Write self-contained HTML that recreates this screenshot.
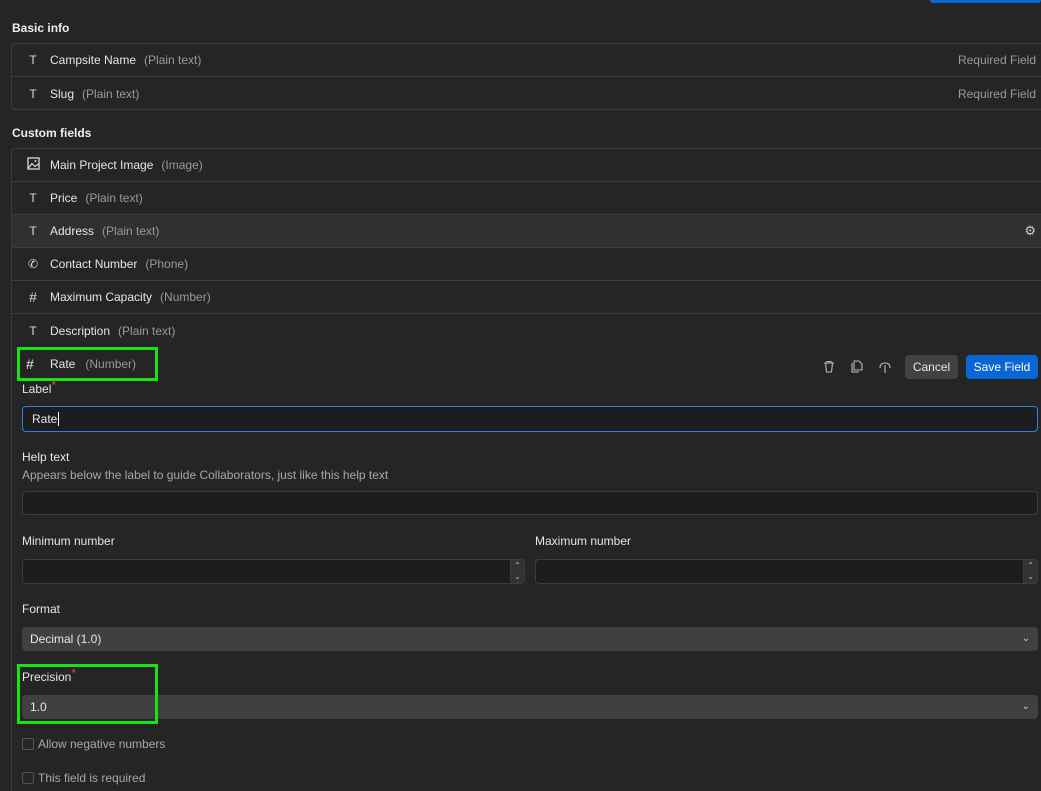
<!DOCTYPE html>
<html><head><style>
*{box-sizing:border-box;margin:0;padding:0}
html{width:1041px;height:791px;overflow:hidden}
body{width:1041px;height:791px;overflow:hidden;background:#252525;font-family:"Liberation Sans",sans-serif;font-size:12px;color:#e6e6e6;position:relative}
.a{position:absolute}
h3{position:absolute;left:12px;font-size:12px;font-weight:bold;color:#eee}
.box{position:absolute;left:11px;width:1040px;border:1px solid #3c3c3c;border-radius:4px}
.row{height:33px;border-bottom:1px solid #3c3c3c;position:relative;display:flex;align-items:center}
.row:last-child{border-bottom:none}
.ic{position:absolute;left:14px;width:14px;text-align:center;color:#ddd;font-size:12px}
.nm{position:absolute;left:38px}
.ty{color:#9a9a9a;margin-left:8px}
.req{position:absolute;right:13px;color:#9a9a9a}
.lbl{position:absolute;left:22px;color:#e6e6e6}
.inp{position:absolute;background:#1d1d1d;border:1px solid #3c3c3c;border-radius:4px;height:25px}
.sel{position:absolute;left:22px;width:1016px;height:24px;background:#404040;border-radius:4px;padding-left:8px;line-height:24px}
.chev{position:absolute;right:8px;top:0;color:#ccc;font-size:10px}
.star{color:#ff3b3b;position:relative;top:-4px}
.cb{position:absolute;left:22px;width:12px;height:12px;border:1px solid #555;border-radius:2px;background:#262626}
.green{position:absolute;border:3px solid #14e614}
.spin{position:absolute;right:0;top:0;width:14px;height:23px;background:#333;border-left:1px solid #3c3c3c;font-size:8px;color:#bbb;text-align:center;line-height:11px}
</style></head><body>
<div class="a" style="left:930px;top:0;width:111px;height:3px;background:#0a66d4;border-radius:0 0 3px 3px"></div>
<h3 style="top:21px">Basic info</h3>
<div class="box" style="top:43px;height:67px">
 <div class="row"><span class="ic">T</span><span class="nm">Campsite Name<span class="ty">(Plain text)</span></span><span class="req" style="right:14px">Required Field</span></div>
 <div class="row"><span class="ic">T</span><span class="nm">Slug<span class="ty">(Plain text)</span></span><span class="req" style="right:14px">Required Field</span></div>
</div>
<h3 style="top:126px">Custom fields</h3>
<div class="box" style="top:148px;height:660px">
 <div class="row"><span class="ic"><svg width="13" height="13" viewBox="0 0 13 13"><rect x="1" y="1" width="11" height="11" fill="none" stroke="#ddd" stroke-width="1.3"/><path d="M1.5 11 L5 6.5 L8 9.5 L11.5 7" fill="none" stroke="#ddd" stroke-width="1.2"/><circle cx="8.5" cy="4" r="1" fill="#ddd"/></svg></span><span class="nm">Main Project Image<span class="ty">(Image)</span></span></div>
 <div class="row"><span class="ic">T</span><span class="nm">Price<span class="ty">(Plain text)</span></span></div>
 <div class="row" style="background:#303030"><span class="ic">T</span><span class="nm">Address<span class="ty">(Plain text)</span></span><span class="req" style="right:14px;color:#ccc;font-size:13px">⚙</span></div>
 <div class="row"><span class="ic">✆</span><span class="nm">Contact Number<span class="ty">(Phone)</span></span></div>
 <div class="row"><span class="ic" style="font-size:14px">#</span><span class="nm">Maximum Capacity<span class="ty">(Number)</span></span></div>
 <div class="row"><span class="ic">T</span><span class="nm">Description<span class="ty">(Plain text)</span></span></div>
</div>
<span class="a" style="left:26px;top:356px;font-size:14px">#</span>
<span class="a" style="left:50px;top:357px">Rate<span class="ty" style="margin-left:10px">(Number)</span></span>
<svg class="a" style="left:823px;top:360px" width="12" height="13" viewBox="0 0 12 13"><path d="M1 3h10 M4 3V1.5h4V3 M2.5 3l1 9h5l1-9" fill="none" stroke="#bbb" stroke-width="1.1"/></svg>
<svg class="a" style="left:851px;top:360px" width="12" height="13" viewBox="0 0 12 13"><path d="M3 1h5l3 3v6H3z M1 3v9h7" fill="none" stroke="#bbb" stroke-width="1.1"/></svg>
<svg class="a" style="left:879px;top:360px" width="12" height="13" viewBox="0 0 12 13"><path d="M6 5v8 M1 8 Q1 3 6 3 Q11 3 11 8" fill="none" stroke="#bbb" stroke-width="1.1"/></svg>
<div class="a" style="left:905px;top:355px;width:53px;height:24px;background:#424242;border-radius:4px;line-height:24px;text-align:center">Cancel</div>
<div class="a" style="left:966px;top:355px;width:72px;height:24px;background:#0a66d4;border-radius:4px;line-height:24px;text-align:center;color:#fff">Save Field</div>
<span class="lbl" style="top:382px">Label<span class="star">*</span></span>
<div class="inp" style="left:22px;top:406px;width:1016px;height:26px;border-color:#2f7fe8;padding-left:9px;line-height:24px">Rate<span style="border-left:1px solid #fff;margin-left:1px"></span></div>
<span class="lbl" style="top:450px">Help text</span>
<span class="lbl" style="top:468px;color:#a8a8a8">Appears below the label to guide Collaborators, just like this help text</span>
<div class="inp" style="left:22px;top:491px;width:1016px;height:24px"></div>
<span class="lbl" style="top:534px">Minimum number</span>
<span class="a" style="left:535px;top:534px">Maximum number</span>
<div class="inp" style="left:22px;top:559px;width:503px"><div class="spin">⌃<br>⌄</div></div>
<div class="inp" style="left:535px;top:559px;width:503px"><div class="spin">⌃<br>⌄</div></div>
<span class="lbl" style="top:602px">Format</span>
<div class="sel" style="top:627px">Decimal (1.0)<span class="chev">⌄</span></div>
<span class="lbl" style="top:670px">Precision<span class="star">*</span></span>
<div class="sel" style="top:695px">1.0<span class="chev">⌄</span></div>
<div class="cb" style="top:738px"></div><span class="a" style="left:38px;top:737px;color:#a8a8a8">Allow negative numbers</span>
<div class="cb" style="top:772px"></div><span class="a" style="left:38px;top:771px;color:#a8a8a8">This field is required</span>
<div class="green" style="left:17px;top:347px;width:141px;height:34px"></div>
<div class="green" style="left:17px;top:664px;width:141px;height:60px"></div>
</body></html>
